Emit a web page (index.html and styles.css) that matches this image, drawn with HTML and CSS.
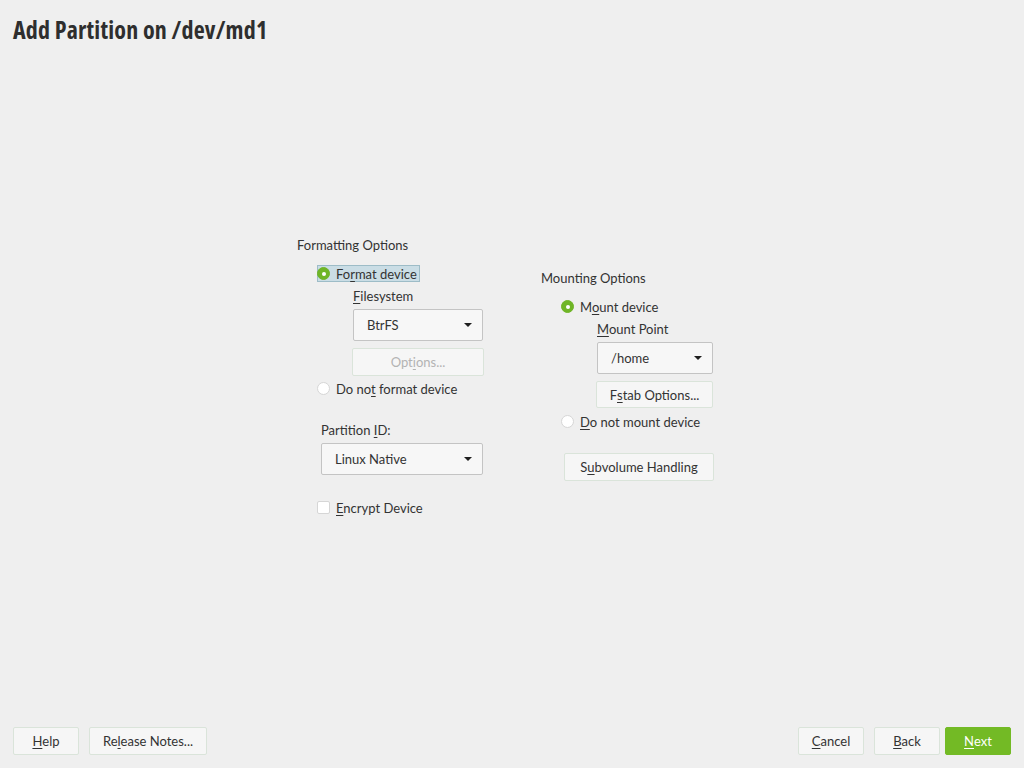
FILE: index.html
```html
<!DOCTYPE html>
<html>
<head>
<meta charset="utf-8">
<title>Add Partition</title>
<link rel="stylesheet" href="styles.css">
</head>
<body>
<div class="app">
  <header class="header"><h1 class="title">Add Partition on /dev/md1</h1></header>
  <main class="main">
    <section class="col col-left">
      <div class="group-label">Formatting Options</div>
      <div class="radio-row focus"><span class="radio checked"></span><span>Fo<u>r</u>mat device</span></div>
      <div class="sub">
        <div class="field-label"><u>F</u>ilesystem</div>
        <div class="combo w130"><span>BtrFS</span><span class="arrow"></span></div>
        <div class="btn disabled w132">Opt<u>i</u>ons...</div>
      </div>
      <div class="radio-row r-notformat"><span class="radio"></span><span>Do no<u>t</u> format device</span></div>
      <div class="field-label pid">Partition <u>I</u>D:</div>
      <div class="combo w162 ml4"><span>Linux Native</span><span class="arrow"></span></div>
      <div class="radio-row r-encrypt"><span class="check"></span><span><u>E</u>ncrypt Device</span></div>
    </section>
    <section class="col col-right">
      <div class="group-label">Mounting Options</div>
      <div class="radio-row r-mount"><span class="radio checked"></span><span>M<u>o</u>unt device</span></div>
      <div class="sub">
        <div class="field-label"><u>M</u>ount Point</div>
        <div class="combo w116"><span>/home</span><span class="arrow"></span></div>
        <div class="btn w117 fstab">F<u>s</u>tab Options...</div>
      </div>
      <div class="radio-row r-notmount"><span class="radio"></span><span><u>D</u>o not mount device</span></div>
      <div class="btn subvol">S<u>u</u>bvolume Handling</div>
    </section>
  </main>
  <footer class="footer">
    <div class="btn-group">
      <div class="btn fbtn w66"><u>H</u>elp</div>
      <div class="btn fbtn w118">Re<u>l</u>ease Notes...</div>
    </div>
    <div class="btn-group">
      <div class="btn fbtn w66"><u>C</u>ancel</div>
      <div class="btn fbtn w66 back"><u>B</u>ack</div>
      <div class="btn fbtn w66 primary"><u>N</u>ext</div>
    </div>
  </footer>
</div>
</body>
</html>
```
FILE: styles.css
```css
* { box-sizing: border-box; }
html, body { margin: 0; padding: 0; }
body {
  background: #efefef;
  color: #333333;
  font-family: "Lato", "Open Sans", sans-serif;
  font-size: 13px;
  line-height: 16px;
}
u { text-decoration: underline; text-underline-offset: 2px; text-decoration-thickness: 1px; }
.app { height: 768px; display: flex; flex-direction: column; }
.header { padding: 14px 13px 0; }
.title {
  margin: 0;
  font-family: "Open Sans", sans-serif;
  font-weight: 700;
  font-stretch: 75%;
  font-size: 24px;
  line-height: 32px;
  color: #2e2e2e;
  letter-spacing: 0.2px;
}
.main { flex: 1; display: flex; padding: 191px 0 0 297px; }
.col { display: flex; flex-direction: column; align-items: flex-start; }
.col-left { width: 244px; }
.col-right { padding-top: 33px; }
.group-label { height: 16px; }
.radio-row {
  display: flex; align-items: center; gap: 6px;
  height: 17px; margin-left: 20px; padding: 0 1px 0 0;
}
.col-left .radio-row.focus { margin-top: 12px; background: #cadde5; border: 1px solid #9dbcc7; padding-right: 2px; }
.focus .radio { margin-left: -1px; }
.radio {
  width: 13px; height: 13px; border-radius: 50%;
  background: #ffffff; border: 1px solid #d6d6d6;
  flex: none; position: relative;
}
.radio.checked { background: #6fb526; border-color: #6fb526; }
.radio.checked::after {
  content: ""; position: absolute; left: 3.5px; top: 3.5px;
  width: 4px; height: 4px; border-radius: 50%; background: #ffffff;
}
.check {
  width: 13px; height: 13px; border-radius: 2px;
  background: #ffffff; border: 1px solid #d6d6d6; flex: none;
}
.sub { margin-left: 56px; display: flex; flex-direction: column; align-items: flex-start; }
.col-left .sub .field-label { margin-top: 6px; }
.field-label { height: 16px; }
.combo {
  margin-top: 5px; height: 32px;
  display: flex; align-items: center; justify-content: space-between;
  padding: 0 10px 0 13px;
  background: #f7f7f7; border: 1px solid #c4c4c4; border-radius: 2px;
}
.arrow { width: 0; height: 0; border-left: 4px solid transparent; border-right: 4px solid transparent; border-top: 4px solid #1f1f1f; }
.w130 { width: 130px; }
.w162 { width: 162px; }
.w116 { width: 116px; }
.btn {
  height: 28px; display: flex; align-items: center; justify-content: center;
  background: #f6f6f6; border: 1px solid #dae4da; border-radius: 2px;
  color: #333333;
}
.btn.disabled { color: #b3b3b3; margin-top: 7px; margin-left: -1px; }
.w132 { width: 132px; }
.w117 { width: 117px; }
.r-notformat { margin-top: 4px; }
.pid { margin-top: 25px; margin-left: 24px; }
.ml4 { margin-left: 24px; }
.r-encrypt { margin-top: 24px; }
.r-mount { margin-top: 12px; }
.col-right .sub .field-label { margin-top: 6px; }
.fstab { margin-top: 7px; margin-left: -1px; height: 27px; }
.r-notmount { margin-top: 5px; }
.subvol { margin-top: 23px; margin-left: 23px; width: 150px; }
.footer { display: flex; justify-content: space-between; padding: 0 13px 13px; }
.btn-group { display: flex; gap: 10px; }
.fbtn { height: 28px; }
.w66 { width: 66px; }
.w118 { width: 118px; }
.back { margin-right: -5px; }
.primary { background: #73ba25; border-color: #73ba25; color: #ffffff; }
```
